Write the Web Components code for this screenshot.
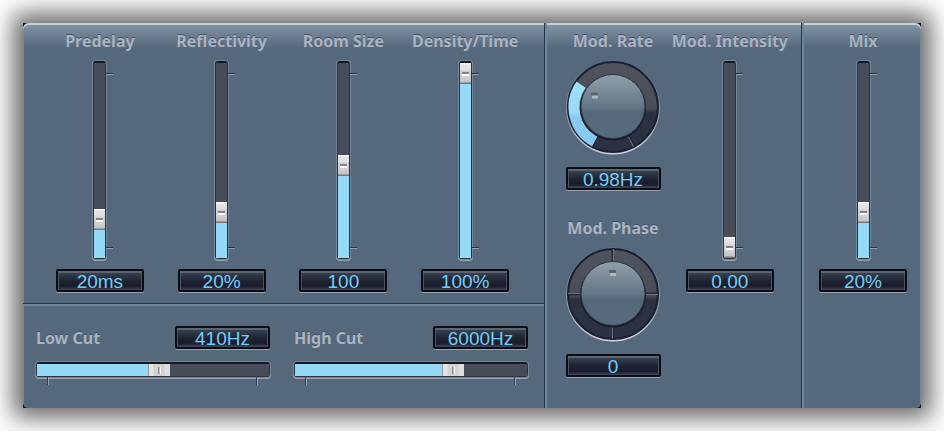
<!DOCTYPE html>
<html lang="en">
<head>
  <meta charset="utf-8">
  <title>Reverb</title>
  <style>
    body {
      margin: 0;
      padding: 23px;
      background: #fff;
      font: 700 16px/20px "Noto Sans", sans-serif;
      color: #abb4c0;
    }
  </style>
</head>
<body>
  <fx-panel>
    <fx-section>
      <fx-fader value="16" text="20ms">Predelay</fx-fader>
      <fx-fader value="20" text="20%">Reflectivity</fx-fader>
      <fx-fader value="47" text="100">Room Size</fx-fader>
      <fx-fader value="100" text="100%">Density/Time</fx-fader>
      <fx-cut slot="footer" value="53" text="410Hz">Low Cut</fx-cut>
      <fx-cut slot="footer" value="70" text="6000Hz">High Cut</fx-cut>
    </fx-section>
    <fx-section class="mod">
      <fx-stack>
        <fx-knob value="30" from="-152" to="-55" ticks="152,208" text="0.98Hz">Mod. Rate</fx-knob>
        <fx-knob value="50" from="0" to="0" ticks="0,90,180,270" text="0">Mod. Phase</fx-knob>
      </fx-stack>
      <fx-fader value="0" text="0.00">Mod. Intensity</fx-fader>
    </fx-section>
    <fx-section class="mix">
      <fx-fader value="20" text="20%">Mix</fx-fader>
    </fx-section>
  </fx-panel>

  <script>
    const labelCss = `
      label { white-space: nowrap; text-shadow: 0 -1px 0 #40536a; }
    `;

    class Panel extends HTMLElement {
      constructor() {
        super();
        this.attachShadow({ mode: 'open' }).innerHTML = `
          <style>
            :host {
              display: block;
              background: #101722;
              box-shadow: 0 0 22px 10px #6a6a6a;
            }
            div {
              display: grid;
              grid-template-columns: 522fr 257fr 119fr;
              border-radius: 6px;
              background: linear-gradient(#8495a6, #56687c 25px);
              box-shadow: inset 0 2px 0 #c6d0d8, inset 1px 0 0 #72869a, inset -1px 0 0 #72869a;
            }
          </style>
          <div><slot></slot></div>`;
      }
    }

    class Section extends HTMLElement {
      constructor() {
        super();
        this.attachShadow({ mode: 'open' }).innerHTML = `
          <style>
            :host {
              display: flex;
              flex-direction: column;
              border-right: 1px solid #20344e;
            }
            :host(:not(:first-child)) { border-left: 2px solid #73879b; }
            :host(:last-child) { border-right: 0; }
            .main {
              display: flex;
              padding: 8px 18px 11px 16px;
            }
            :host(.mod) .main { justify-content: space-between; padding: 8px 13px 31px 18px; }
            :host(.mix) .main { padding: 8px 13px 8px 14px; }
            ::slotted(fx-fader) { flex: 1; }
            :host(.mod) ::slotted(fx-fader) { flex: none; }
            .footer {
              flex: 1;
              display: flex;
              gap: 24px;
              padding: 20px 16px 22px 13px;
              border-top: 1px solid #20344e;
              box-shadow: inset 0 2px 0 #73879b;
            }
            ::slotted(fx-cut) { flex: 1; }
          </style>
          <div class="main"><slot></slot></div>`;
        if (this.querySelector('[slot=footer]')) {
          this.shadowRoot.innerHTML += '<div class="footer"><slot name="footer"></slot></div>';
        }
      }
    }

    class Stack extends HTMLElement {
      constructor() {
        super();
        this.attachShadow({ mode: 'open' }).innerHTML = `
          <style>:host { display: flex; flex-direction: column; gap: 28px; }</style>
          <slot></slot>`;
      }
    }

    class Readout extends HTMLElement {
      constructor() {
        super();
        this.attachShadow({ mode: 'open' }).innerHTML = `
          <style>
            :host {
              display: block;
              box-sizing: border-box;
              width: 88px;
              height: 23px;
              border: 2px solid #0b0d14;
              border-radius: 2px;
              background: linear-gradient(#3c4856, #1f2533 50%, #1a1a2a 80%, #3b4456);
              box-shadow: inset 0 2px 0 #5d6571, inset 1px 0 0 #4a5361, inset -1px 0 0 #4a5361, inset 0 -1px 0 #3f4758, 0 1px 0 #98a4b0;
              font: 400 19px/21px "Liberation Sans", sans-serif;
              color: #74cdf8;
              text-align: center;
            }
          </style>
          <output><slot></slot></output>`;
      }
    }

    // track with fill and thumb; set "vertical" for an upright one
    class Slider extends HTMLElement {
      constructor() {
        super();
        this.attachShadow({ mode: 'open' }).innerHTML = `
          <style>
            :host {
              --pos: calc(11px + var(--value) * (100% - 22px));
              position: relative;
              display: block;
              border: 1px solid #2a3342;
              border-top: 2px solid #15171e;
              border-radius: 3px;
              box-shadow: 0 0 0 1px #74869a, 0 1px 0 1px #98a4b1;
            }
            input {
              appearance: none;
              display: block;
              width: 100%;
              height: 12px;
              margin: 0;
              background: linear-gradient(to right, #94d9f6 var(--pos), #464d59 var(--pos));
            }
            input::-webkit-slider-thumb {
              appearance: none;
              width: 22px;
              height: 12px;
              background:
                linear-gradient(to right, #8a8a8a 1px, #bbb 1px 2px, #f4f4f4 2px) 10px 3px / 3px 7px no-repeat,
                linear-gradient(to right, #999 1px, #e4e4e4 1px 5px, #d2d2d2 6px 16px, #dedede 17px);
            }
            :host([vertical]) { width: 11px; }
            :host([vertical]) input {
              writing-mode: vertical-lr;
              direction: rtl;
              width: 11px;
              height: 195px;
              background: linear-gradient(to top, #94d9f6 var(--pos), #464d59 var(--pos));
            }
            :host([vertical]) input::-webkit-slider-thumb {
              width: 11px;
              height: 21px;
              background:
                linear-gradient(#858585 2px, #fff 2px) 2px 9px / 7px 4px no-repeat,
                linear-gradient(#fafafa 1px, #e2e2e2 2px 7px, #d0d0d0 8px 14px, #c4c4c4 19px, #777 20px);
            }
            i {
              position: absolute;
              top: 100%;
              width: 1px;
              height: 8px;
              margin-top: 1px;
              background: #2a405a;
              border-right: 1px solid #98a4b1;
            }
            i:first-of-type { left: 10px; }
            i:last-of-type { right: 11px; }
            :host([vertical]) i {
              left: 100%;
              width: 7px;
              height: 1px;
              margin: 0 0 0 1px;
              border: 0;
              background: #20344e;
              border-bottom: 1px solid #98a4b1;
            }
            :host([vertical]) i:first-of-type { top: 10px; }
            :host([vertical]) i:last-of-type { top: auto; bottom: 9px; }
          </style>
          <input type="range" min="0" max="100">
          <i></i><i></i>`;
        const input = this.shadowRoot.querySelector('input');
        input.value = this.getAttribute('value');
        input.setAttribute('aria-label', this.getAttribute('name'));
        const update = () => this.style.setProperty('--value', input.value / 100);
        input.addEventListener('input', update);
        update();
      }
    }

    class Fader extends HTMLElement {
      constructor() {
        super();
        const name = this.textContent.trim();
        this.attachShadow({ mode: 'open' }).innerHTML = `
          <style>
            :host { display: flex; flex-direction: column; align-items: center; gap: 10px; }
            ${labelCss}
          </style>
          <label><slot></slot></label>
          <fx-slider vertical name="${name}" value="${this.getAttribute('value')}"></fx-slider>
          <fx-readout>${this.getAttribute('text')}</fx-readout>`;
      }
    }

    class Cut extends HTMLElement {
      constructor() {
        super();
        const name = this.textContent.trim();
        this.attachShadow({ mode: 'open' }).innerHTML = `
          <style>
            :host { display: block; }
            .row { display: flex; justify-content: space-between; align-items: center; margin: 2px 0 13px; }
            fx-readout { width: 95px; }
            ${labelCss}
          </style>
          <div class="row">
            <label><slot></slot></label>
            <fx-readout>${this.getAttribute('text')}</fx-readout>
          </div>
          <fx-slider name="${name}" value="${this.getAttribute('value')}"></fx-slider>`;
      }
    }

    // angles are in degrees, clockwise from the top
    function polar(angle, r) {
      const a = angle * Math.PI / 180;
      return (48 + r * Math.sin(a)).toFixed(2) + ' ' + (48 - r * Math.cos(a)).toFixed(2);
    }

    class Knob extends HTMLElement {
      constructor() {
        super();
        const from = Number(this.getAttribute('from'));
        const to = Number(this.getAttribute('to'));
        const ticks = this.getAttribute('ticks').split(',').map(t =>
          `<path d="M${polar(Number(t) - 1, 33)}L${polar(Number(t) - 1, 45)}" stroke="#1d2230" stroke-width="1.5"/>
           <path d="M${polar(Number(t) + 0.6, 33)}L${polar(Number(t) + 0.6, 45)}" stroke="#737a86"/>`).join('');
        const arc = `M${polar(from, 39)}A39 39 0 0 1 ${polar(to, 39)}`;
        const [x, y] = polar(to, 22).split(' ').map(Number);
        this.attachShadow({ mode: 'open' }).innerHTML = `
          <style>
            :host { display: flex; flex-direction: column; align-items: center; }
            .dial { position: relative; height: 96px; margin: 8px 0 12px; }
            svg { display: block; }
            input { position: absolute; inset: 0; width: 100%; height: 100%; margin: 0; opacity: 0; }
            fx-readout { width: 95px; }
            ${labelCss}
          </style>
          <label for="knob"><slot></slot></label>
          <div class="dial">
            <svg width="96" height="96" viewBox="0 0 96 96" fill="none">
              <defs>
                <linearGradient id="rim" x2="0" y2="1">
                  <stop stop-color="#64778b"/><stop offset=".5" stop-color="#8593a2"/><stop offset="1" stop-color="#d3d9de"/>
                </linearGradient>
                <linearGradient id="ring" x2="0" y2="1">
                  <stop stop-color="#50545f"/><stop offset=".52" stop-color="#4a4d58"/>
                  <stop offset=".56" stop-color="#2c3140"/><stop offset="1" stop-color="#2d3242"/>
                </linearGradient>
                <linearGradient id="cap" x2="0" y2="1">
                  <stop stop-color="#91a0ac"/><stop offset=".5" stop-color="#657686"/>
                  <stop offset=".6" stop-color="#566878"/><stop offset="1" stop-color="#586b7d"/>
                </linearGradient>
                <linearGradient id="lit" gradientUnits="userSpaceOnUse" x1="0" y1="20" x2="0" y2="84">
                  <stop stop-color="#9edff8"/><stop offset=".52" stop-color="#99dbf8"/>
                  <stop offset=".6" stop-color="#88c9f2"/><stop offset="1" stop-color="#86cbf5"/>
                </linearGradient>
              </defs>
              <circle cx="48" cy="48.5" r="47" fill="url(#rim)"/>
              <circle cx="48" cy="48" r="45" fill="url(#ring)" stroke="#1a2132" stroke-width="2"/>
              ${ticks}
              ${from !== to ? `<path d="${arc}" stroke="url(#lit)" stroke-width="11"/>` : ''}
              <circle cx="48" cy="48.5" r="33" fill="#151a24"/>
              <circle cx="48" cy="47.5" r="32" fill="url(#cap)" stroke="#2b3543"/>
              <rect x="${x - 4}" y="${y - 2}" width="7" height="3" rx="1" fill="#5c6064"/>
              <rect x="${x - 3}" y="${y + 1}" width="6" height="3" rx="1" fill="#b3babf"/>
            </svg>
            <input id="knob" type="range" min="0" max="100" value="${this.getAttribute('value')}">
          </div>
          <fx-readout>${this.getAttribute('text')}</fx-readout>`;
      }
    }

    customElements.define('fx-panel', Panel);
    customElements.define('fx-section', Section);
    customElements.define('fx-stack', Stack);
    customElements.define('fx-readout', Readout);
    customElements.define('fx-slider', Slider);
    customElements.define('fx-fader', Fader);
    customElements.define('fx-cut', Cut);
    customElements.define('fx-knob', Knob);
  </script>
</body>
</html>
